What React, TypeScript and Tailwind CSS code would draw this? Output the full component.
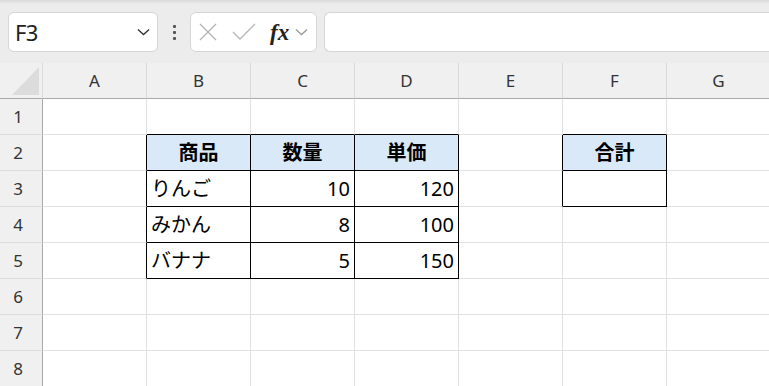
import React from "react";

const COLS = ["A", "B", "C", "D", "E", "F", "G"];
const ROWS = [1, 2, 3, 4, 5, 6, 7, 8];

type CellData = { text: string; head?: boolean; num?: boolean };

// cell contents keyed by "B2" style address
const data: Record<string, CellData> = {
  B2: { text: "商品", head: true },
  C2: { text: "数量", head: true },
  D2: { text: "単価", head: true },
  F2: { text: "合計", head: true },
  B3: { text: "りんご" },
  C3: { text: "10", num: true },
  D3: { text: "120", num: true },
  B4: { text: "みかん" },
  C4: { text: "8", num: true },
  D4: { text: "100", num: true },
  B5: { text: "バナナ" },
  C5: { text: "5", num: true },
  D5: { text: "150", num: true },
  F3: { text: "" },
};

const inTable = (c: string, r: number) =>
  (["B", "C", "D"].includes(c) && r >= 2 && r <= 5) || (c === "F" && (r === 2 || r === 3));

function Cell({ col, row }: { col: string; row: number }) {
  const idx = COLS.indexOf(col);
  const next = COLS[idx + 1];
  const d = data[`${col}${row}`];
  const rightBlack = inTable(col, row) || (next !== undefined && inTable(next, row));
  const bottomBlack = inTable(col, row) || inTable(col, row + 1);

  return (
    <div
      className={`h-9 border-r border-b flex items-center px-[4px] text-[20px] text-black ${
        rightBlack ? "border-r-black" : "border-r-[#e1e1e1]"
      } ${bottomBlack ? "border-b-black" : "border-b-[#e1e1e1]"} ${
        d?.head ? "bg-[#dae9f8] justify-center font-bold" : "bg-white"
      } ${d?.num ? "justify-end" : ""}`}
    >
      {d?.text}
    </div>
  );
}

function Chevron({ className }: { className: string }) {
  return (
    <svg viewBox="0 0 14 8" className={className} fill="none" stroke="currentColor" strokeWidth="1.4">
      <path d="M1 1.2 L7 6.8 L13 1.2" />
    </svg>
  );
}

export default function App() {
  return (
    <div
      className="w-[769px] h-[386px] overflow-hidden bg-[#ececec]"
      style={{ fontFamily: '"Noto Sans", "Noto Sans CJK JP", sans-serif' }}
    >
      {/* formula bar */}
      <div className="h-[63px] relative">
        <div className="absolute inset-x-0 top-0 h-[4px] bg-gradient-to-b from-[#d9d9d9] to-[#ececec]" />
        <div className="flex items-center pt-3 pl-2 gap-0">
          <div className="w-[150px] h-10 bg-white rounded-[6px] border border-[#d6d6d6] flex items-center pl-[6px] pr-[7px]">
            <span className="flex-1 text-[22px] text-[#222] tracking-tight">F3</span>
            <Chevron className="w-[13px] h-[8px] text-[#333]" />
          </div>
          <div className="w-[32px] flex flex-col items-center gap-[3px]">
            <span className="w-[3px] h-[3px] bg-[#555] rounded-[1px]" />
            <span className="w-[3px] h-[3px] bg-[#555] rounded-[1px]" />
            <span className="w-[3px] h-[3px] bg-[#555] rounded-[1px]" />
          </div>
          <div className="w-[127px] h-10 bg-white rounded-[6px] border border-[#d6d6d6] flex items-center pl-[7px]">
            <svg viewBox="0 0 20 20" className="w-[20px] h-[20px] text-[#b5b5b5]" fill="none" stroke="currentColor" strokeWidth="1.3">
              <path d="M2 2 L18 18 M18 2 L2 18" />
            </svg>
            <svg viewBox="0 0 24 18" className="w-[24px] h-[18px] ml-[14px] text-[#b5b5b5]" fill="none" stroke="currentColor" strokeWidth="1.3">
              <path d="M1 9 L8 16 L23 1" />
            </svg>
            <span
              className="ml-[14px] text-[23px] italic font-semibold text-[#222] leading-none"
              style={{ fontFamily: '"Liberation Serif", "DejaVu Serif", serif' }}
            >
              fx
            </span>
            <Chevron className="ml-[6px] w-[13px] h-[8px] text-[#999]" />
          </div>
          <div className="ml-[7px] flex-1 h-10 bg-white rounded-l-[6px] border border-r-0 border-[#d6d6d6]" />
        </div>
      </div>

      {/* sheet */}
      <div className="grid grid-cols-[43px_repeat(7,104px)]">
        {/* corner */}
        <div className="h-9 bg-[#f0f0f0] border-r border-b border-r-[#dadada] border-b-[#a9a9a9] relative">
          <svg viewBox="0 0 27 28" className="absolute left-[12px] top-[4px] w-[27px] h-[28px]">
            <path d="M0 28 L27 0 L27 28 Z" fill="#dcdcdc" />
          </svg>
        </div>
        {COLS.map((c) => (
          <div
            key={c}
            className="h-9 bg-[#f0f0f0] border-r border-b border-r-[#d9d9d9] border-b-[#a9a9a9] flex items-center justify-center text-[17px] text-[#333]"
          >
            {c}
          </div>
        ))}

        {ROWS.map((r) => (
          <React.Fragment key={r}>
            <div className="h-9 bg-[#f0f0f0] border-r border-b border-r-[#a9a9a9] border-b-[#dcdcdc] flex items-center justify-center text-[17px] text-[#333] pr-[6px]">
              {r}
            </div>
            {COLS.map((c) => (
              <Cell key={c} col={c} row={r} />
            ))}
          </React.Fragment>
        ))}
      </div>
    </div>
  );
}
